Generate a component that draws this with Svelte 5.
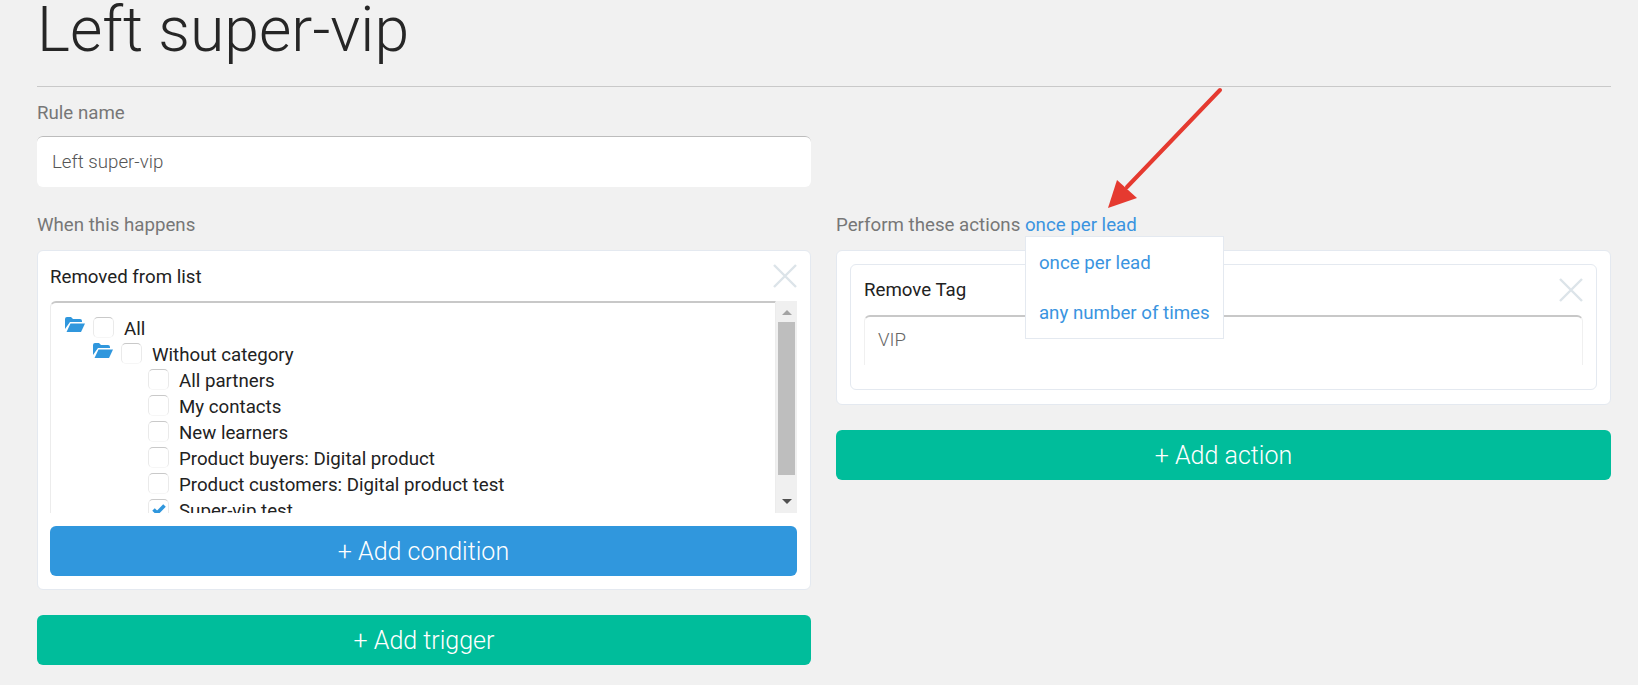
<script lang="ts">
  const tree = [
    { label: "All", level: 0, folder: true },
    { label: "Without category", level: 1, folder: true },
    { label: "All partners", level: 2 },
    { label: "My contacts", level: 2 },
    { label: "New learners", level: 2 },
    { label: "Product buyers: Digital product", level: 2 },
    { label: "Product customers: Digital product test", level: 2 },
    { label: "Super-vip test", level: 2, checked: true },
  ];
</script>

{#snippet closeIcon()}
  <svg class="close" viewBox="0 0 24 24" width="24" height="24">
    <path d="M1 1 23 23M23 1 1 23" stroke="#dce4e9" stroke-width="2.4" fill="none" />
  </svg>
{/snippet}

<div class="page">
  <h1>Left super-vip</h1>
  <hr />
  <div class="label rule-label">Rule name</div>
  <div class="half">
    <div class="input">Left super-vip</div>
  </div>

  <div class="columns">
    <div>
      <div class="label">When this happens</div>
      <div class="card">
        <div class="card-head">
          <span>Removed from list</span>
          {@render closeIcon()}
        </div>
        <div class="tree-wrap">
          <div class="tree">
            {#each tree as row}
              <div class="row" class:l1={row.level === 1} class:l2={row.level === 2}>
                {#if row.folder}
                  <svg class="folder" viewBox="0 0 20 15" width="20" height="15">
                    <path d="M0 12V2a2 2 0 0 1 2-2h4l2 2h7a2 2 0 0 1 2 2v1H5z" fill="#3097dd" />
                    <path d="M5.5 6.5H20L16 15H1.5z" fill="#3097dd" />
                  </svg>
                {/if}
                <span class="check">
                  {#if row.checked}
                    <svg viewBox="0 0 14 11" width="14" height="11">
                      <path d="M1.5 5.5 5.2 9 12.5 1.5" stroke="#3097dd" stroke-width="3.6" fill="none" />
                    </svg>
                  {/if}
                </span>
                <span class="row-text">{row.label}</span>
              </div>
            {/each}
          </div>
          <div class="scrollbar">
            <svg viewBox="0 0 10 5" width="10" height="5"><path d="M5 0 10 5H0z" fill="#a3a3a3" /></svg>
            <div class="thumb"></div>
            <svg viewBox="0 0 10 5" width="10" height="5"><path d="M0 0H10L5 5z" fill="#505050" /></svg>
          </div>
        </div>
        <button class="btn blue">+ Add condition</button>
      </div>
      <button class="btn green trigger">+ Add trigger</button>
    </div>

    <div>
      <div class="label">
        Perform these actions
        <span class="picker">
          <span class="link">once per lead</span>
          <div class="menu">
            <div class="link">once per lead</div>
            <div class="link">any number of times</div>
          </div>
        </span>
      </div>
      <div class="card action-card">
        <div class="inner">
          <div class="card-head">
            <span>Remove Tag</span>
            {@render closeIcon()}
          </div>
          <div class="tags">VIP</div>
        </div>
      </div>
      <button class="btn green trigger">+ Add action</button>
    </div>
  </div>

  <svg class="arrow" viewBox="0 0 130 130" width="130" height="130">
    <path d="M120 4 27 101" stroke="#e53a30" stroke-width="4" stroke-linecap="round" fill="none" />
    <path d="M8 122 17 94 37 112z" fill="#e53a30" />
  </svg>
</div>

<style>
  :global(body) {
    margin: 0;
    background: #f1f1f1;
  }

  .page {
    position: relative;
    box-sizing: border-box;
    height: 685px;
    overflow: hidden;
    padding: 0 27px 0 37px;
    font-family: Roboto, "Liberation Sans", sans-serif;
    font-size: 18.7px;
    color: #222;
  }

  h1 {
    margin: 0;
    height: 86px;
    font-size: 62.5px;
    line-height: 60px;
    font-weight: 300;
    color: #262626;
  }

  hr {
    margin: 0;
    border: 0;
    border-top: 1px solid #c9c9c9;
  }

  .label {
    height: 25px;
    line-height: 25px;
    color: #777;
  }

  .rule-label {
    margin-top: 14px;
  }

  .half {
    width: 774px;
    margin-top: 10px;
  }

  .input {
    box-sizing: border-box;
    height: 51px;
    line-height: 50px;
    padding-left: 15px;
    background: #fff;
    border-radius: 6px;
    border-top: 1px solid #bcbcbc;
    font-weight: 300;
    color: #555;
  }

  .columns {
    display: grid;
    grid-template-columns: 774px 775px;
    gap: 25px;
    margin-top: 25px;
  }

  .columns .label {
    line-height: 27px;
  }

  .card {
    box-sizing: border-box;
    margin-top: 13px;
    height: 340px;
    padding: 0 13px 0 12px;
    background: #fff;
    border: 1px solid #e4e9f0;
    border-radius: 6px;
  }

  .card-head {
    display: flex;
    justify-content: space-between;
    height: 50px;
    padding-top: 13px;
    box-sizing: border-box;
    line-height: 24px;
    color: #222;
  }

  .card > .card-head span {
    margin-top: 1px;
  }

  .tree-wrap {
    display: flex;
    height: 212px;
  }

  .tree {
    flex: 1;
    overflow: hidden;
    padding-top: 14px;
    box-sizing: border-box;
    border: 1px solid #ececec;
    border-top: 2px solid #c8c8c8;
    border-bottom: 0;
    border-radius: 6px 0 0 0;
  }

  .row {
    display: flex;
    align-items: flex-start;
    height: 26px;
    padding-left: 14px;
    line-height: 26px;
  }

  .row.l1 {
    padding-left: 42px;
  }

  .row.l2 {
    padding-left: 97px;
  }

  .folder {
    margin-right: 8px;
  }

  .check {
    box-sizing: border-box;
    display: flex;
    align-items: center;
    justify-content: center;
    flex: none;
    width: 21px;
    height: 21px;
    margin-right: 10px;
    border: 1px solid #eaeaea;
    border-top-color: #c9c9c9;
    border-bottom-color: #f6f6f6;
    border-radius: 5px;
  }

  .row-text {
    margin-top: -1px;
  }

  .scrollbar {
    display: flex;
    flex-direction: column;
    align-items: center;
    justify-content: space-between;
    width: 21px;
    padding: 9px 0;
    box-sizing: border-box;
    background: #f0f0f0;
  }

  .thumb {
    width: 17px;
    height: 153px;
    margin-bottom: 18px;
    background: #bebebe;
  }

  .btn {
    display: block;
    width: 100%;
    height: 50px;
    border: 0;
    border-radius: 6px;
    font-family: inherit;
    font-size: 25px;
    font-weight: 300;
    color: #fff;
  }

  .blue {
    margin-top: 13px;
    background: #3097dd;
  }

  .green {
    background: #00bd9b;
  }

  .trigger {
    margin-top: 25px;
  }

  .picker {
    position: relative;
  }

  .link {
    color: #3a94e0;
  }

  .menu {
    position: absolute;
    z-index: 2;
    top: 22px;
    left: 0;
    box-sizing: border-box;
    width: 199px;
    height: 103px;
    padding: 1px 13px 0;
    background: #fff;
    border: 1px solid #e4e9f0;
  }

  .menu .link {
    height: 50px;
    line-height: 50px;
    white-space: nowrap;
  }

  .action-card {
    height: 155px;
    padding: 13px 13px 0;
  }

  .inner {
    box-sizing: border-box;
    height: 126px;
    padding: 0 13px;
    border: 1px solid #e4e9f0;
    border-radius: 6px;
  }

  .tags {
    box-sizing: border-box;
    height: 50px;
    line-height: 46px;
    padding-left: 13px;
    border: 1px solid #f0f0f0;
    border-top: 2px solid #c8c8c8;
    border-bottom: 0;
    border-radius: 6px 6px 0 0;
    font-weight: 300;
    color: #666;
  }

  .arrow {
    position: absolute;
    left: 1100px;
    top: 86px;
    overflow: visible;
  }
</style>
